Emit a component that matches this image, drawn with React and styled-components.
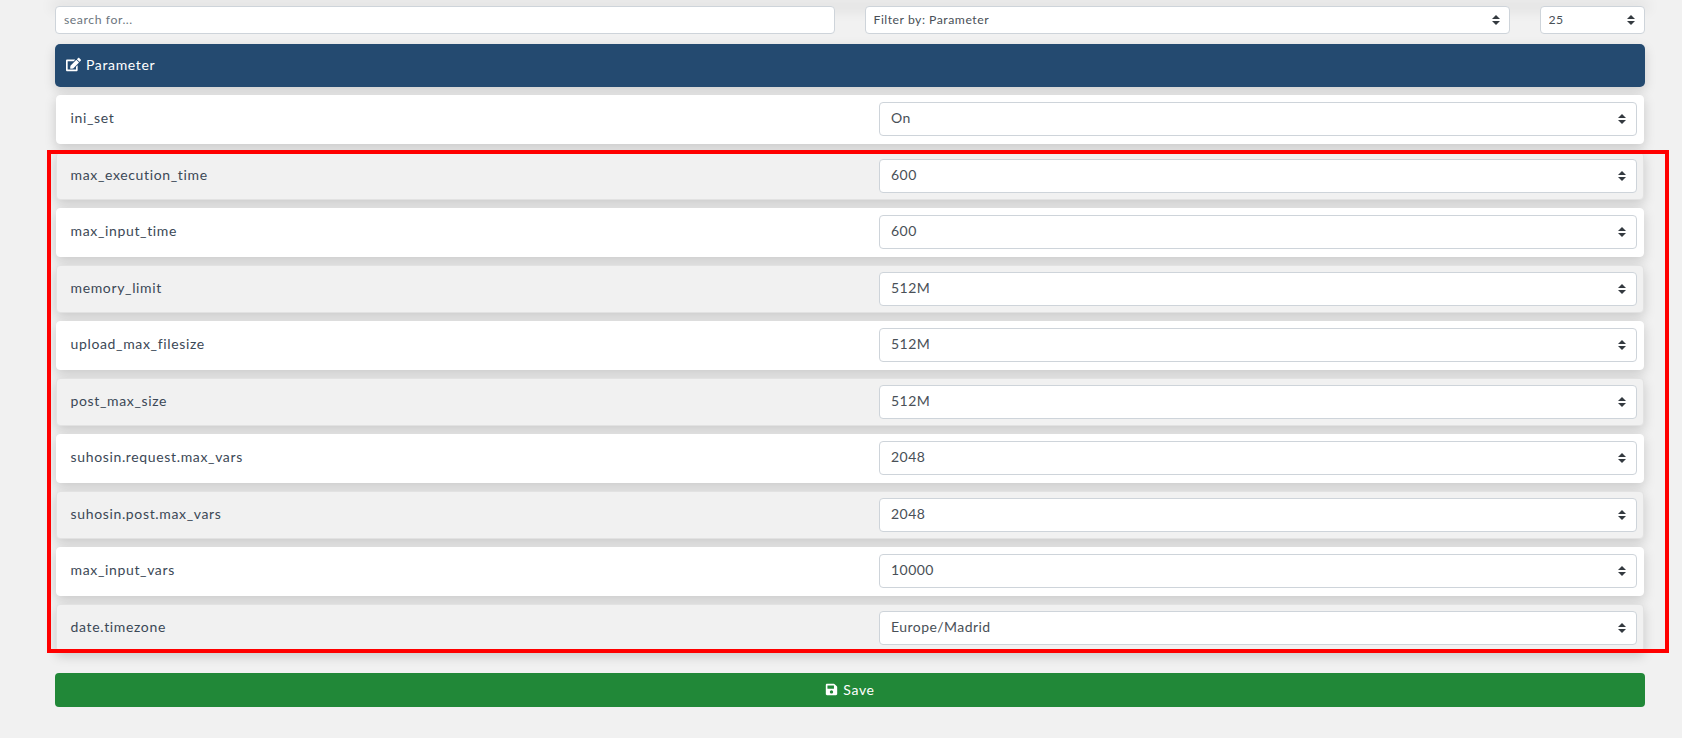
import React from 'react';
import styled, { createGlobalStyle } from 'styled-components';
import { FaEdit, FaSave } from 'react-icons/fa';

const params = [
  { name: 'ini_set', value: 'On' },
  { name: 'max_execution_time', value: '600' },
  { name: 'max_input_time', value: '600' },
  { name: 'memory_limit', value: '512M' },
  { name: 'upload_max_filesize', value: '512M' },
  { name: 'post_max_size', value: '512M' },
  { name: 'suhosin.request.max_vars', value: '2048' },
  { name: 'suhosin.post.max_vars', value: '2048' },
  { name: 'max_input_vars', value: '10000' },
  { name: 'date.timezone', value: 'Europe/Madrid' },
];

const Arrows = () => (
  <ArrowIcon viewBox="0 0 4 5">
    <path fill="#343a40" d="M2 0L0 2h4zm0 5L0 3h4z" />
  </ArrowIcon>
);

const Select = ({ value, small }) => (
  <SelectWrap>
    <SelectBox $small={small} defaultValue={value}>
      <option>{value}</option>
    </SelectBox>
    <Arrows />
  </SelectWrap>
);

const App = () => (
  <>
    <GlobalStyle />
    <Page>
      <TopShadow />
      <Toolbar>
        <SearchInput placeholder="search for..." />
        <Select small value="Filter by: Parameter" />
        <Select small value="25" />
      </Toolbar>

      <Header>
        <FaEdit size={15} />
        Parameter
      </Header>

      <Rows>
        {params.map((p, index) => (
          <Row key={p.name} $odd={index % 2 === 1}>
            <Label>{p.name}</Label>
            <Select value={p.value} />
          </Row>
        ))}
      </Rows>

      <SaveButton>
        <FaSave size={13} />
        Save
      </SaveButton>

      <Highlight />
    </Page>
  </>
);

export default App;

// -------------------- CSS -------------------- //

const GlobalStyle = createGlobalStyle`
  html, body {
    margin: 0;
    padding: 0;
    background: #f1f1f1;
    overflow: hidden;
  }
  * {
    box-sizing: border-box;
  }
  body {
    font-family: "Lato", "Noto Sans", sans-serif;
  }
`;

const Page = styled.div`
  position: relative;
  height: 738px;
  padding: 6px 37px 0 55px;
`;

const TopShadow = styled.div`
  height: 0;
  box-shadow: 0 0 14px 3px rgba(0, 0, 0, 0.12);
`;

const Toolbar = styled.div`
  display: grid;
  grid-template-columns: 780px 645px 105px;
  justify-content: space-between;
`;

const SearchInput = styled.input`
  height: 27.5px;
  padding: 0 8px;
  background: #fff;
  border: 1px solid #ced4da;
  border-radius: 4px;
  font: 12.25px "Lato", sans-serif;
  letter-spacing: 0.55px;
  color: #495057;
  outline: none;

  &::placeholder {
    color: #6c757d;
    opacity: 1;
  }
`;

const SelectWrap = styled.div`
  position: relative;
  display: flex;
`;

const SelectBox = styled.select`
  appearance: none;
  width: 100%;
  height: ${(p) => (p.$small ? '27.5px' : '33.6px')};
  padding: 0 ${(p) => (p.$small ? '7.5px' : '11px')};
  padding-bottom: ${(p) => (p.$small ? '0' : '3px')};
  background: #fff;
  border: 1px solid #ced4da;
  border-radius: 4px;
  font-family: "Lato", sans-serif;
  font-size: ${(p) => (p.$small ? '12.25px' : '14px')};
  letter-spacing: ${(p) => (p.$small ? '0.5px' : '0.45px')};
  color: #495057;
  outline: none;
`;

const ArrowIcon = styled.svg`
  position: absolute;
  top: 50%;
  right: 10.5px;
  width: 8px;
  height: 10px;
  margin-top: -5px;
  pointer-events: none;
`;

const Header = styled.div`
  display: flex;
  align-items: center;
  gap: 5px;
  height: 43px;
  margin-top: 10.5px;
  padding: 0 0 2px 11px;
  background: #244a70;
  border-radius: 5px;
  box-shadow: 0 4px 12px rgba(0, 0, 0, 0.15);
  color: #fff;
  font-size: 14px;
  letter-spacing: 0.65px;
`;

const Rows = styled.div`
  display: flex;
  flex-direction: column;
  gap: 8px;
  margin: 8px 1px 0;
`;

const Row = styled.div`
  display: grid;
  grid-template-columns: 1fr 757.5px;
  align-items: center;
  height: 48.5px;
  padding: 0 6.5px 0 13.5px;
  background: ${(p) => (p.$odd ? '#f1f1f1' : '#fff')};
  border: 1px solid ${(p) => (p.$odd ? '#e2e2e2' : '#fff')};
  border-radius: 4px;
  box-shadow: 0 4px 12px rgba(0, 0, 0, 0.17);
`;

const Label = styled.div`
  padding-bottom: 3px;
  font-size: 14px;
  letter-spacing: 0.65px;
  color: #3b4856;
`;

const SaveButton = styled.button`
  display: flex;
  align-items: center;
  justify-content: center;
  gap: 5px;
  width: 100%;
  height: 34px;
  margin-top: 21px;
  padding: 0 0 2px;
  background: #218838;
  border: none;
  border-radius: 4px;
  color: #fff;
  font-family: "Lato", sans-serif;
  font-size: 14px;
  letter-spacing: 0.65px;
`;

const Highlight = styled.div`
  position: absolute;
  left: 47px;
  top: 150px;
  width: 1622px;
  height: 503px;
  border: 4px solid #ff0000;
  pointer-events: none;
`;
